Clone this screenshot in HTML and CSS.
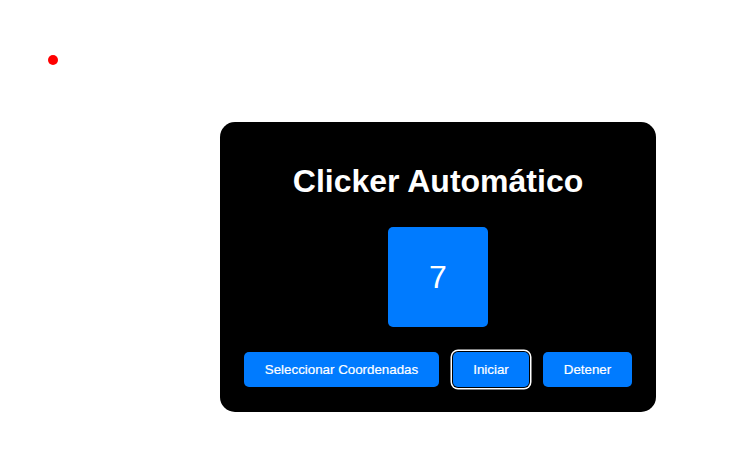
FILE: index.html
```html
<!DOCTYPE html>
<html lang="es">
<head>
<meta charset="utf-8">
<title>Clicker Automático</title>
<link rel="stylesheet" href="styles.css">
</head>
<body>
<div class="marker"></div>
<main class="page">
  <section class="panel">
    <h1 class="title">Clicker Automático</h1>
    <div class="counter">7</div>
    <div class="actions">
      <button class="btn">Seleccionar Coordenadas</button>
      <button class="btn btn-focus">Iniciar</button>
      <button class="btn">Detener</button>
    </div>
  </section>
</main>
</body>
</html>
```
FILE: styles.css
```css
html, body {
  margin: 0;
  padding: 0;
  background: #fff;
  font-family: "Liberation Sans", Arial, sans-serif;
}

.marker {
  position: absolute;
  left: 48px;
  top: 55px;
  width: 10px;
  height: 10px;
  border-radius: 50%;
  background: #ff0000;
}

.page {
  padding: 122px 0 0 220px;
}

.panel {
  width: 436px;
  box-sizing: border-box;
  background: #000;
  border-radius: 15px;
  padding: 41px 20px 25px;
  display: flex;
  flex-direction: column;
  align-items: center;
}

.title {
  margin: 0 0 27px;
  font-size: 32px;
  font-weight: bold;
  line-height: 37px;
  color: #fff;
}

.counter {
  width: 100px;
  height: 100px;
  border-radius: 5px;
  background: #007bff;
  color: #fff;
  font-size: 32px;
  display: flex;
  align-items: center;
  justify-content: center;
  margin-bottom: 25px;
}

.actions {
  display: flex;
  gap: 14px;
}

.btn {
  font-family: "Liberation Sans", Arial, sans-serif;
  font-size: 13.333px;
  line-height: 15px;
  padding: 10px 20.5px;
  border: none;
  border-radius: 5px;
  background: #007bff;
  color: #fff;
  -webkit-text-stroke: 0.2px #fff;
}

.btn-focus {
  box-shadow: 0 0 0 1px #000, 0 0 0 2.5px #fff;
}
```
